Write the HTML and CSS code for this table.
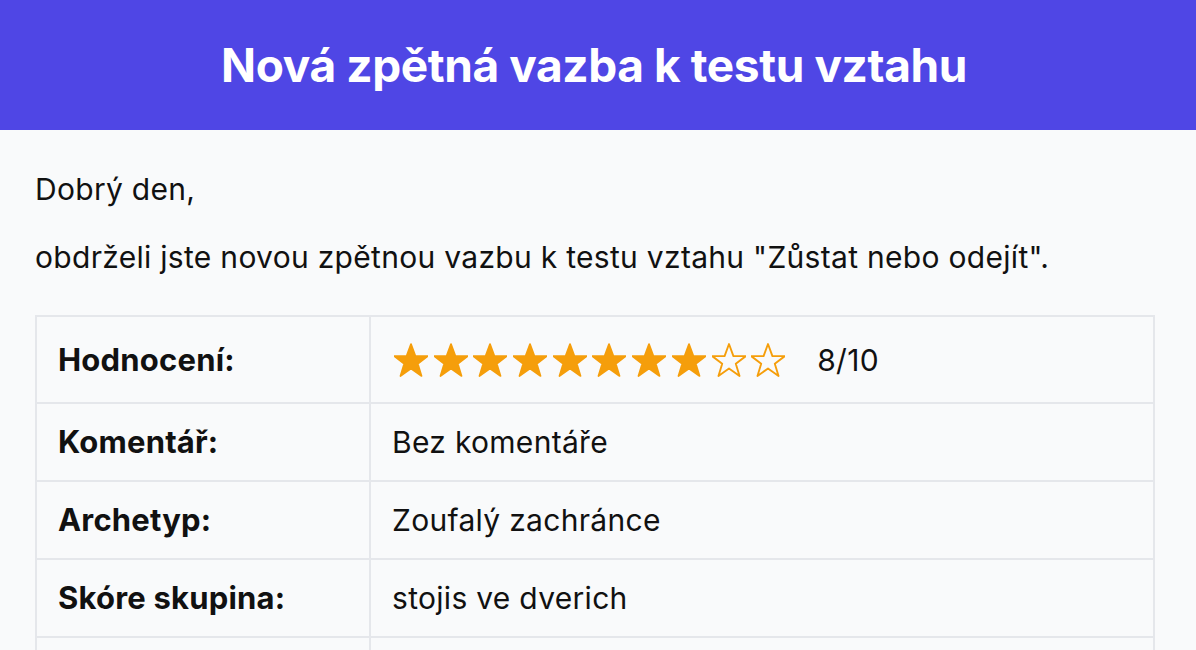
FILE: index.html
```html
<!DOCTYPE html>
<html lang="cs">
<head>
<meta charset="utf-8">
<title>Nová zpětná vazba k testu vztahu</title>
<link rel="stylesheet" href="styles.css">
</head>
<body>
<header class="hero">
  <h1 class="hero-title">Nová zpětná vazba k testu vztahu</h1>
</header>
<main class="content">
  <p class="para">Dobrý den,</p>
  <p class="para">obdrželi jste novou zpětnou vazbu k testu vztahu "Zůstat nebo odejít".</p>
  <table class="info">
    <tr class="row-rating">
      <th class="label">Hodnocení:</th>
      <td class="value">
        <div class="rating">
          <div class="stars">
            <svg class="star" viewBox="2 2 20 20"><path class="full" d="M12 2.6l2.6 7.1h7.3l-5.9 4.5 2.2 7.2L12 17l-6.2 4.4 2.2-7.2-5.9-4.5h7.3z"/></svg>
            <svg class="star" viewBox="2 2 20 20"><path class="full" d="M12 2.6l2.6 7.1h7.3l-5.9 4.5 2.2 7.2L12 17l-6.2 4.4 2.2-7.2-5.9-4.5h7.3z"/></svg>
            <svg class="star" viewBox="2 2 20 20"><path class="full" d="M12 2.6l2.6 7.1h7.3l-5.9 4.5 2.2 7.2L12 17l-6.2 4.4 2.2-7.2-5.9-4.5h7.3z"/></svg>
            <svg class="star" viewBox="2 2 20 20"><path class="full" d="M12 2.6l2.6 7.1h7.3l-5.9 4.5 2.2 7.2L12 17l-6.2 4.4 2.2-7.2-5.9-4.5h7.3z"/></svg>
            <svg class="star" viewBox="2 2 20 20"><path class="full" d="M12 2.6l2.6 7.1h7.3l-5.9 4.5 2.2 7.2L12 17l-6.2 4.4 2.2-7.2-5.9-4.5h7.3z"/></svg>
            <svg class="star" viewBox="2 2 20 20"><path class="full" d="M12 2.6l2.6 7.1h7.3l-5.9 4.5 2.2 7.2L12 17l-6.2 4.4 2.2-7.2-5.9-4.5h7.3z"/></svg>
            <svg class="star" viewBox="2 2 20 20"><path class="full" d="M12 2.6l2.6 7.1h7.3l-5.9 4.5 2.2 7.2L12 17l-6.2 4.4 2.2-7.2-5.9-4.5h7.3z"/></svg>
            <svg class="star" viewBox="2 2 20 20"><path class="full" d="M12 2.6l2.6 7.1h7.3l-5.9 4.5 2.2 7.2L12 17l-6.2 4.4 2.2-7.2-5.9-4.5h7.3z"/></svg>
            <svg class="star" viewBox="2 2 20 20"><path class="empty" d="M12 2.6l2.6 7.1h7.3l-5.9 4.5 2.2 7.2L12 17l-6.2 4.4 2.2-7.2-5.9-4.5h7.3z"/></svg>
            <svg class="star" viewBox="2 2 20 20"><path class="empty" d="M12 2.6l2.6 7.1h7.3l-5.9 4.5 2.2 7.2L12 17l-6.2 4.4 2.2-7.2-5.9-4.5h7.3z"/></svg>
          </div>
          <span class="score">8/10</span>
        </div>
      </td>
    </tr>
    <tr>
      <th class="label">Komentář:</th>
      <td class="value">Bez komentáře</td>
    </tr>
    <tr>
      <th class="label">Archetyp:</th>
      <td class="value">Zoufalý zachránce</td>
    </tr>
    <tr>
      <th class="label">Skóre skupina:</th>
      <td class="value">stojis ve dverich</td>
    </tr>
    <tr>
      <th class="label">&nbsp;</th>
      <td class="value">&nbsp;</td>
    </tr>
  </table>
</main>
</body>
</html>
```

FILE: styles.css
```css
html, body {
  margin: 0;
  padding: 0;
}
body {
  background: #f9fafb;
  color: #111111;
  font-family: Inter, "Liberation Sans", sans-serif;
}
.hero {
  background: #4f46e5;
  height: 130px;
  padding-right: 8px;
  display: flex;
  align-items: center;
  justify-content: center;
}
.hero-title {
  margin: 0;
  color: #ffffff;
  font-size: 46px;
  line-height: 56px;
  font-weight: 700;
  letter-spacing: -0.4px;
}
.content {
  padding: 37px 41px 0 35px;
}
.para {
  margin: 0 0 24px;
  font-size: 30px;
  line-height: 44px;
  letter-spacing: 0.3px;
}
.info {
  width: 100%;
  border-collapse: collapse;
  margin-top: 36px;
}
.info th, .info td {
  border: 2px solid #e5e7eb;
  font-size: 30px;
  line-height: 34px;
  letter-spacing: 0.3px;
  padding: 21px 21px;
  text-align: left;
  vertical-align: middle;
}
.info th.label {
  width: 290px;
  font-weight: 700;
  font-size: 31px;
  letter-spacing: 0.2px;
}
.row-rating th, .row-rating td {
  padding-top: 26px;
  padding-bottom: 25px;
}
.rating {
  display: flex;
  align-items: center;
  gap: 32px;
}
.stars {
  display: flex;
  gap: 5.7px;
  margin-left: 2px;
}
.star {
  width: 34px;
  height: 34px;
  display: block;
}
.full {
  fill: #f59e0b;
  stroke: #f59e0b;
  stroke-width: 1;
  stroke-linejoin: round;
}
.empty {
  fill: none;
  stroke: #f59e0b;
  stroke-width: 1.1;
  stroke-linejoin: round;
}
```
